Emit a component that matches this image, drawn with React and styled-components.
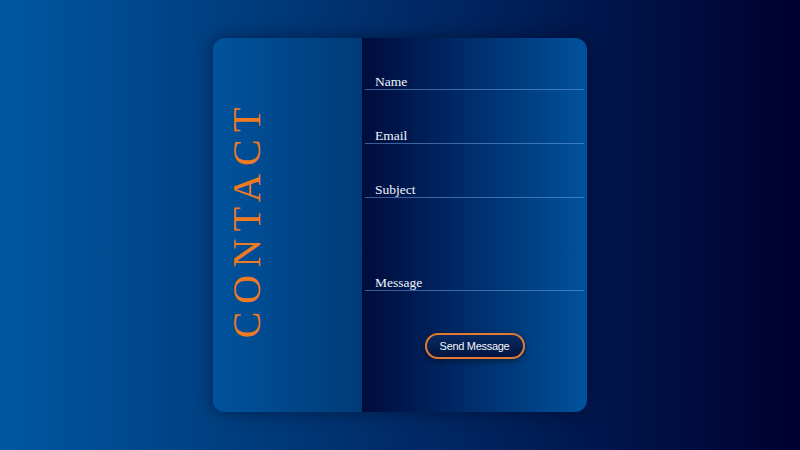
import React from "react";
import styled, { createGlobalStyle } from "styled-components";

const GlobalStyle = createGlobalStyle`
  html, body {
    margin: 0;
    padding: 0;
  }
  body {
    width: 800px;
    height: 450px;
    overflow: hidden;
    background: linear-gradient(to right, #0057a0, #000030);
    font-family: "Liberation Serif", "Times New Roman", serif;
  }
`;

const fields = [
  { name: "name", label: "Name" },
  { name: "email", label: "Email" },
  { name: "subject", label: "Subject" },
  { name: "message", label: "Message", tall: true },
];

const App = () => {
  return (
    <>
      <GlobalStyle />
      <Page>
        <Card>
          <TitlePanel>
            <Title>CONTACT</Title>
          </TitlePanel>
          <FormPanel onSubmit={(e) => e.preventDefault()}>
            {fields.map((field) => (
              <Field key={field.name} $tall={field.tall}>
                <Label htmlFor={field.name}>{field.label}</Label>
              </Field>
            ))}
            <ButtonRow>
              <SendButton type="submit">Send Message</SendButton>
            </ButtonRow>
          </FormPanel>
        </Card>
      </Page>
    </>
  );
};

export default App;

const Page = styled.div`
  width: 800px;
  height: 450px;
  display: flex;
  align-items: center;
  justify-content: center;
`;

const Card = styled.div`
  width: 374px;
  height: 374px;
  display: flex;
  border-radius: 12px;
  overflow: hidden;
  box-shadow: 0 0 18px rgba(0, 0, 20, 0.45);
`;

const TitlePanel = styled.div`
  width: 149px;
  display: flex;
  align-items: center;
  padding: 0 0 12px 14px;
  box-sizing: border-box;
  background: linear-gradient(to right, #00539d, #003b78);
`;

const Title = styled.h1`
  margin: 0;
  writing-mode: vertical-rl;
  transform: rotate(180deg);
  font-family: "Liberation Serif", "Times New Roman", serif;
  font-weight: 400;
  font-size: 40px;
  line-height: 1;
  letter-spacing: 7.5px;
  color: #f07a22;
`;

const FormPanel = styled.form`
  flex: 1;
  display: flex;
  flex-direction: column;
  gap: 29px;
  padding: 27px 3px 0;
  background: linear-gradient(to right, #000b3c, #00529d);
`;

const Field = styled.div`
  box-sizing: border-box;
  height: ${(p) => (p.$tall ? "64px" : "25px")};
  display: flex;
  align-items: flex-end;
  padding: 0 10px 1px;
  border-bottom: 1px solid rgba(110, 160, 225, 0.55);
`;

const Label = styled.label`
  font-size: 13.5px;
  line-height: 1;
  color: #f0f4fb;
`;

const ButtonRow = styled.div`
  display: flex;
  justify-content: center;
  margin-top: 13px;
`;

const SendButton = styled.button`
  width: 100px;
  height: 26px;
  padding: 0;
  border: 2px solid #e47a32;
  border-radius: 13px;
  background: linear-gradient(to bottom, #082a62, #001442);
  color: #f2f5fb;
  font-family: "Liberation Sans", Arial, sans-serif;
  font-size: 11px;
  letter-spacing: -0.3px;
  box-shadow: 0 2px 6px rgba(0, 0, 0, 0.45);
  cursor: pointer;
`;
